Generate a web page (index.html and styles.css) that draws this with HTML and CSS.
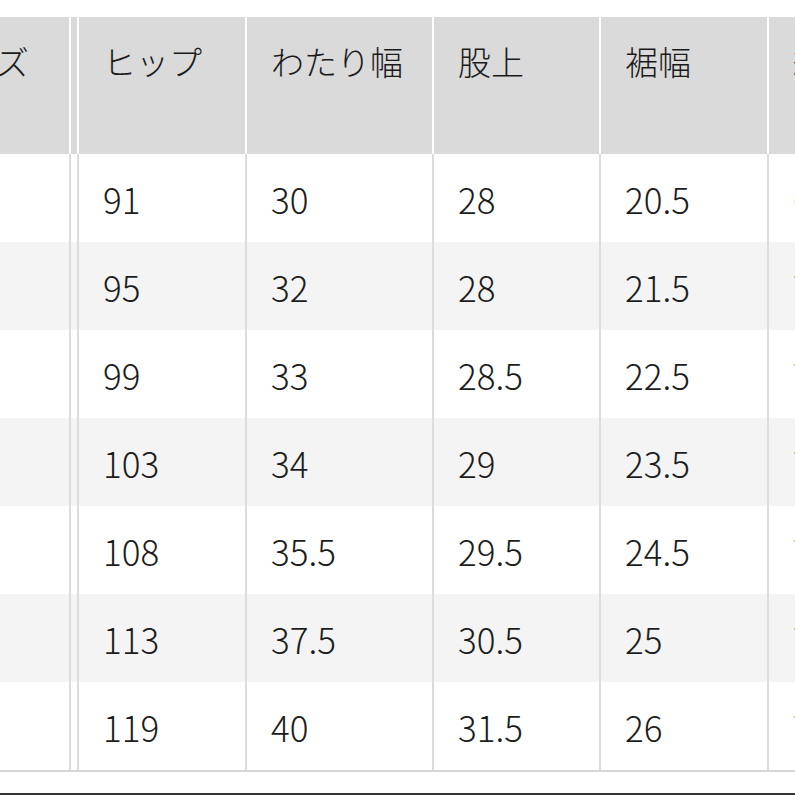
FILE: index.html
```html
<!DOCTYPE html>
<html lang="ja">
<head>
<meta charset="utf-8">
<title>サイズ表</title>
<link rel="stylesheet" href="styles.css">
</head>
<body>
<div class="page">
  <div class="viewport">
    <div class="size-table">
      <div class="cell head first">サイズ</div>
      <div class="cell head gap"></div>
      <div class="cell head">ヒップ</div>
      <div class="cell head">わたり幅</div>
      <div class="cell head">股上</div>
      <div class="cell head">裾幅</div>
      <div class="cell head last">総丈</div>

      <div class="cell first"></div><div class="cell gap"></div>
      <div class="cell">91</div><div class="cell">30</div><div class="cell">28</div><div class="cell">20.5</div><div class="cell last">69</div>

      <div class="cell first alt"></div><div class="cell gap alt"></div>
      <div class="cell alt">95</div><div class="cell alt">32</div><div class="cell alt">28</div><div class="cell alt">21.5</div><div class="cell last alt">70</div>

      <div class="cell first"></div><div class="cell gap"></div>
      <div class="cell">99</div><div class="cell">33</div><div class="cell">28.5</div><div class="cell">22.5</div><div class="cell last">71</div>

      <div class="cell first alt"></div><div class="cell gap alt"></div>
      <div class="cell alt">103</div><div class="cell alt">34</div><div class="cell alt">29</div><div class="cell alt">23.5</div><div class="cell last alt">72</div>

      <div class="cell first"></div><div class="cell gap"></div>
      <div class="cell">108</div><div class="cell">35.5</div><div class="cell">29.5</div><div class="cell">24.5</div><div class="cell last">73</div>

      <div class="cell first alt"></div><div class="cell gap alt"></div>
      <div class="cell alt">113</div><div class="cell alt">37.5</div><div class="cell alt">30.5</div><div class="cell alt">25</div><div class="cell last alt">74</div>

      <div class="cell first"></div><div class="cell gap"></div>
      <div class="cell">119</div><div class="cell">40</div><div class="cell">31.5</div><div class="cell">26</div><div class="cell last">75</div>
    </div>
  </div>
  <div class="footer-space"></div>
  <div class="bottom-bar"></div>
</div>
</body>
</html>
```

FILE: styles.css
```css
html, body {
  margin: 0;
  padding: 0;
  background: #ffffff;
}

body {
  font-family: "Noto Sans CJK JP", "Noto Sans", sans-serif;
  color: #1c1c1c;
}

.page {
  width: 795px;
  height: 795px;
  overflow: hidden;
  display: flex;
  flex-direction: column;
  padding-top: 17px;
  box-sizing: border-box;
}

.viewport {
  width: 795px;
  overflow: hidden;
}

.size-table {
  margin-left: -94px;
  display: grid;
  grid-template-columns: 165px 8px 168px 187px 167px 168px 168px;
  grid-template-rows: 137px repeat(7, 88px);
  border-bottom: 2px solid #d6d6d6;
  width: max-content;
}

.cell {
  box-sizing: border-box;
  border-right: 2px solid #dcdcdc;
  padding-left: 24px;
  display: flex;
  align-items: center;
  font-size: 35px;
  font-weight: 300;
  background: #ffffff;
  white-space: nowrap;
}

.cell.alt {
  background: #f4f4f4;
}

.cell.gap {
  padding-left: 0;
}

.cell.head {
  background: #dadada;
  border-right-color: #ffffff;
  align-items: flex-start;
  padding-top: 20px;
  font-size: 33px;
  line-height: 48px;
  font-weight: 300;
  color: #1a1a1a;
}

.cell.head.first {
  justify-content: flex-end;
  padding-right: 40px;
}

.footer-space {
  flex: 1;
}

.bottom-bar {
  height: 2px;
  background: #333333;
}
```
